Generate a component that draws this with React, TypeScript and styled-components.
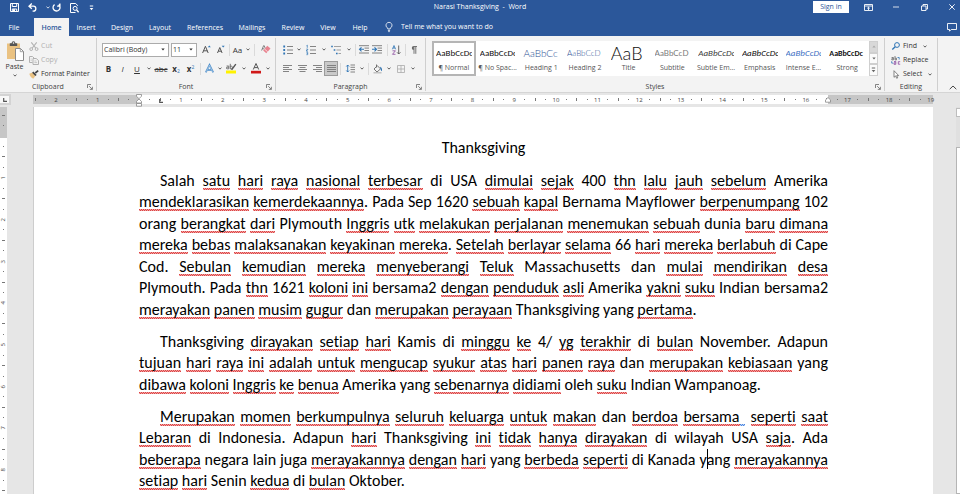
import React from "react";
import styled, { createGlobalStyle, css } from "styled-components";

const UI_FONT = '"Segoe UI", "Open Sans", "Noto Sans", sans-serif';
const DOC_FONT = 'Calibri, Carlito, Lato, sans-serif';
const LIGHT_FONT = 'Lato, Carlito, sans-serif';
const BLUE = "#2b579a";

const GlobalStyle = createGlobalStyle`
  *, *::before, *::after { box-sizing: border-box; }
  html, body { margin: 0; height: 100%; overflow: hidden; }
  #root { height: 100%; }
  button, select, input { font: inherit; color: inherit; }
  svg { display: block; flex: none; overflow: visible; }
`;

const Window = styled.div`
  display: flex;
  flex-direction: column;
  height: 100vh;
  background: #e6e6e6;
  font-family: ${UI_FONT};
  font-size: 7px;
  line-height: 10px;
  color: #333;
`;

/* ---------- Title bar ---------- */

const TitleBar = styled.header`
  display: grid;
  grid-template-columns: 1fr auto 1fr;
  align-items: center;
  height: 17px;
  padding-bottom: 3px;
  background: ${BLUE};
  color: #fff;
`;

const QuickAccess = styled.div`
  display: flex;
  align-items: center;
  padding: 1px 0 0 9px;
`;

const PlainButton = styled.button`
  display: flex;
  align-items: center;
  justify-content: center;
  padding: 0;
  border: 0;
  background: transparent;
`;

const QuickButton = styled(PlainButton)<{ $w: number }>`
  width: ${(p) => p.$w}px;
  height: 12px;
`;

const DocTitle = styled.h1`
  margin: 0;
  font-size: 7px;
  font-weight: 400;
  line-height: 14px;
  white-space: pre;
`;

const WindowControls = styled.div`
  display: flex;
  justify-content: flex-end;
  align-items: center;
`;

const SignIn = styled.button`
  width: 36px;
  height: 12px;
  margin-right: 5px;
  padding: 0;
  border: 0;
  background: #fff;
  color: ${BLUE};
  line-height: 12px;
`;

const ControlButton = styled(PlainButton)`
  width: 28px;
  height: 12px;
  &:last-child { width: 22px; padding-left: 6px; }
`;

/* ---------- Tabs ---------- */

const TabBar = styled.nav`
  display: flex;
  align-items: stretch;
  height: 19px;
  padding-top: 1px;
  background: ${BLUE};
  color: #fff;
`;

const Tab = styled.button<{ $w: number; $active?: boolean }>`
  width: ${(p) => p.$w}px;
  padding: 1px 0 0;
  border: 0;
  background: ${(p) => (p.$active ? "#f3f3f3" : "transparent")};
  color: ${(p) => (p.$active ? BLUE : "#fff")};
  font-weight: ${(p) => (p.$active ? 600 : 400)};
  line-height: 17px;
  &:first-child { margin-right: 6px; }
`;

const TellMe = styled.label`
  display: flex;
  align-items: center;
  flex: 1;
  gap: 8px;
  padding-left: 8px;
`;

const TellInput = styled.input`
  width: 110px;
  padding: 0;
  border: 0;
  outline: 0;
  background: transparent;
  line-height: 12px;
  &::placeholder { color: #fff; opacity: 1; }
`;

const CommentButton = styled(PlainButton)`
  width: 16px;
`;

/* ---------- Ribbon ---------- */

const Ribbon = styled.section`
  display: flex;
  height: 57px;
  padding: 2px 0 1px;
  background: #f3f3f3;
  border-bottom: 1px solid #d5d5d5;
`;

const Group = styled.div<{ $w?: number }>`
  display: flex;
  flex-direction: column;
  ${(p) => (p.$w ? css`width: ${p.$w}px; flex: none;` : css`flex: 1; min-width: 0;`)}
  border-right: 1px solid #cfcfcf;
`;

const GroupBody = styled.div`
  flex: 1;
  min-height: 0;
`;

const GroupFooter = styled.div`
  display: grid;
  grid-template-columns: 12px 1fr 12px;
  align-items: center;
  height: 8px;
  text-align: center;
  color: #444;
`;

const Launcher = styled(PlainButton)`
  grid-column: 3;
  height: 8px;
`;

const GroupName = styled.span`
  grid-column: 2;
  line-height: 8px;
`;

const ClipboardBody = styled.div`
  display: flex;
  padding-top: 1px;
`;

const PasteButton = styled.button`
  display: flex;
  flex-direction: column;
  align-items: center;
  width: 29px;
  padding: 2px 0 0;
  border: 0;
  background: transparent;
`;

const PasteLabel = styled.span`
  line-height: 11px;
  margin-bottom: 2px;
`;

const CommandList = styled.div`
  display: flex;
  flex-direction: column;
`;

const Command = styled.button<{ $off?: boolean }>`
  display: flex;
  align-items: center;
  gap: 2px;
  height: 14px;
  padding: 0;
  border: 0;
  background: transparent;
  color: ${(p) => (p.$off ? "#b1b1b1" : "#333")};
  white-space: nowrap;
`;

const CommandLabel = styled.span`
  margin-right: 4px;
`;

const ToolRows = styled.div`
  display: flex;
  flex-direction: column;
  gap: 4px;
  padding: 4px 0 0 5px;
`;

const ToolRow = styled.div`
  display: flex;
  align-items: center;
  height: 15px;
`;

const Tool = styled(PlainButton)<{ $w: number; $on?: boolean }>`
  width: ${(p) => p.$w}px;
  height: 15px;
  flex: none;
  font-size: 8px;
  ${(p) => p.$on && css`background: #c9c9c9; border: 1px solid #9b9b9b;`}
`;

const Divider = styled.span`
  width: 1px;
  height: 12px;
  margin: 0 2px;
  background: #dadada;
`;

const SelectBox = styled.span<{ $w: number }>`
  display: grid;
  align-items: center;
  width: ${(p) => p.$w}px;
  height: 14px;
  margin-right: 2px;
  border: 1px solid #ababab;
  background: #fff;
  & > * { grid-area: 1 / 1; }
  & > svg { justify-self: end; margin-right: 3px; pointer-events: none; }
`;

const Select = styled.select`
  width: 100%;
  height: 12px;
  padding: 0 0 0 1px;
  border: 0;
  outline: 0;
  appearance: none;
  background: transparent;
  font-size: 7px;
  line-height: 12px;
`;

const SubSup = styled.span<{ $up?: boolean }>`
  display: flex;
  align-items: ${(p) => (p.$up ? "flex-start" : "flex-end")};
  line-height: 10px;
`;

const Small = styled.span`
  font-size: 5px;
  line-height: 6px;
  color: #2f75b5;
`;

/* ---------- Style gallery ---------- */

const Gallery = styled.div`
  display: flex;
  height: 35px;
  margin: 3px 6px 0;
`;

const StyleCards = styled.div`
  display: grid;
  grid-template-columns: repeat(10, minmax(0, 1fr));
  flex: 1;
  min-width: 0;
  background: #fff;
`;

const StyleCard = styled.button<{ $on?: boolean }>`
  display: flex;
  flex-direction: column;
  min-width: 0;
  padding: 0 2px;
  border: 2px solid ${(p) => (p.$on ? "#b5b5b5" : "transparent")};
  background: transparent;
  color: #555;
`;

type Look = "normal" | "h1" | "h2" | "title" | "subtitle" | "subtle" | "emphasis" | "intense" | "strong";

const looks: Record<Look, ReturnType<typeof css>> = {
  normal: css`color: #111;`,
  h1: css`font: 300 10px/20px ${LIGHT_FONT}; color: #2f5496;`,
  h2: css`font: 300 8px/20px ${LIGHT_FONT}; color: #2f5496;`,
  title: css`font: 300 18px/20px ${LIGHT_FONT}; color: #111;`,
  subtitle: css`font: 400 8px/20px ${LIGHT_FONT}; color: #7a7a7a;`,
  subtle: css`font-style: italic; color: #404040;`,
  emphasis: css`font-style: italic; color: #111;`,
  intense: css`font-style: italic; color: #4472c4;`,
  strong: css`font-size: 8px; font-weight: 700; color: #111;`,
};

const Preview = styled.span<{ $look: Look }>`
  align-self: stretch;
  height: 20px;
  overflow: hidden;
  text-align: left;
  white-space: nowrap;
  font-family: ${DOC_FONT};
  font-size: 9px;
  line-height: 20px;
  ${(p) => looks[p.$look]}
`;

const StyleName = styled.span`
  align-self: center;
  line-height: 10px;
  white-space: nowrap;
`;

const GalleryScroll = styled.div`
  display: grid;
  grid-template-rows: repeat(3, 1fr);
  width: 9px;
`;

const ScrollStep = styled(PlainButton)<{ $off?: boolean }>`
  border: 1px solid #cfcfcf;
  background: ${(p) => (p.$off ? "#d8d8d8" : "#fbfbfb")};
  color: ${(p) => (p.$off ? "#aaa" : "#666")};
`;

const EditingBody = styled.div`
  padding: 1px 0 0 6px;
`;

const Collapse = styled(PlainButton)`
  align-self: flex-end;
  width: 22px;
  height: 8px;
  padding-left: 7px;
`;

/* ---------- Rulers and workspace ---------- */

const RulerBar = styled.div`
  display: flex;
  align-items: flex-start;
  height: 14px;
  padding-top: 2px;
`;

const TabSelector = styled(PlainButton)`
  width: 11px;
  height: 11px;
  margin: -1px 22px 0 0;
  border: 2px solid #d3d3d3;
  border-left: 0;
  background: #f8f8f8;
`;

const HorizontalRuler = styled.div`
  position: relative;
  flex: 1;
  height: 9px;
  margin-right: 27px;
  background: linear-gradient(
    90deg,
    #c6c6c6 106px,
    #fff 106px calc(100% - 105px),
    #c6c6c6 calc(100% - 105px)
  );
`;

const HorizontalMarks = styled.div`
  display: grid;
  grid-template-columns: repeat(87, minmax(0, 1fr));
  align-items: center;
  justify-items: center;
  height: 9px;
  margin: 0 -3px;
`;

const Mark = styled.span<{ $kind: "dot" | "tick"; $vertical?: boolean }>`
  width: ${(p) => (p.$vertical && p.$kind === "tick" ? 3 : 1)}px;
  height: ${(p) => (!p.$vertical && p.$kind === "tick" ? 3 : 1)}px;
  background: #777;
`;

const MarkNumber = styled.span<{ $vertical?: boolean }>`
  font-size: 6px;
  line-height: 8px;
  color: #444;
  ${(p) => p.$vertical && css`writing-mode: vertical-rl; transform: rotate(180deg); line-height: 7px;`}
`;

const IndentMarker = styled.span<{ $side: "left" | "right" | "tab" }>`
  position: absolute;
  ${(p) => p.$side === "left" && css`left: 103px; top: -1px;`}
  ${(p) => p.$side === "right" && css`right: 102px; top: 2px;`}
  ${(p) => p.$side === "tab" && css`left: 126px; top: 4px;`}
`;

const Workspace = styled.main`
  display: flex;
  flex: 1;
  min-height: 0;
`;

const VerticalRuler = styled.div`
  width: 7px;
  margin-right: 26px;
  padding-top: 3px;
  overflow: hidden;
  background: linear-gradient(#c6c6c6 31px, #fff 31px);
`;

const VerticalMarks = styled.div`
  display: grid;
  grid-template-rows: repeat(37, minmax(0, 1fr));
  align-items: center;
  justify-items: center;
  height: calc(100% + 2px);
`;

const Page = styled.article`
  flex: 1;
  min-width: 0;
  padding: 30px 105px 0;
  border-left: 1px solid #cdcdcd;
  background: #fff;
  color: #000;
  font-family: ${DOC_FONT};
  font-size: 16px;
  font-variant-ligatures: none;
  line-height: 21px;
`;

const PageTitle = styled.h2`
  margin: 0 0 12px;
  font-size: 16px;
  font-weight: 400;
  text-align: center;
`;

const Paragraph = styled.p`
  display: grid;
  grid-auto-rows: 21px 22px;
  margin: 0 0 11px;
`;

const Line = styled.span`
  display: block;
  text-align: justify;
  text-align-last: justify;
  white-space: nowrap;
  &:first-child { padding-left: 21px; }
  &:last-child { text-align-last: left; }
`;

const Flagged = styled.span<{ $kind: "spelling" | "grammar" }>`
  --wave: ${(p) => (p.$kind === "spelling" ? "#dd4444" : "#4a86e0")};
  --haze: ${(p) => (p.$kind === "spelling" ? "#f0a0a0" : "#b9d0f5")};
  background-image:
    repeating-linear-gradient(90deg, var(--wave) 0 1px, var(--haze) 1px 2px),
    repeating-linear-gradient(90deg, var(--haze) 0 1px, var(--wave) 1px 2px);
  background-size: 100% 1px;
  background-repeat: no-repeat;
  background-position: 0 calc(100% - 1px), 0 100%;
`;

const CaretAnchor = styled.span`
  position: relative;
`;

const TextCaret = styled.span`
  position: absolute;
  left: 0;
  top: -1px;
  width: 1px;
  height: 20px;
  background: #000;
`;

const ScrollBar = styled.div`
  display: flex;
  flex-direction: column;
  width: 4px;
  margin-left: 23px;
  padding-top: 1px;
  background: #e0e0e0;
`;

const ScrollUp = styled(PlainButton)`
  height: 9px;
  border: 1px solid #bdbdbd;
  border-right: 0;
  background: #fff;
`;

const ScrollThumb = styled.div`
  flex: 1;
  margin-top: 30px;
  border: 1px solid #b5b5b5;
  border-right: 0;
  background: #fff;
`;

/* ---------- Icons ---------- */

type SvgProps = { w: number; h: number; children: React.ReactNode };
const Svg = ({ w, h, children }: SvgProps) => (
  <svg width={w} height={h} viewBox={`0 0 ${w} ${h}`} fill="none" stroke="currentColor" strokeWidth="1" aria-hidden="true">
    {children}
  </svg>
);

const Chevron = () => (
  <Svg w={4} h={3}><path d="M.5 .7 2 2.1 3.5 .7" strokeWidth=".8" /></Svg>
);
const Arrow = ({ up }: { up?: boolean }) => (
  <Svg w={4} h={3}><path d={up ? "M.3 2.4h3.4L2 .5z" : "M.3.6h3.4L2 2.5z"} fill="currentColor" stroke="none" /></Svg>
);
const SaveIcon = () => (
  <Svg w={9} h={9}><path d="M.5.5h8v8h-8z" /><path d="M2.3.5v3h4.4v-3M2.3 8.5V6h4.4v2.5" /><path d="M3 6.3h2v2H3z" fill="currentColor" stroke="none" /></Svg>
);
const UndoIcon = () => (
  <Svg w={9} h={9}><path d="M3.8.6 1 3.2l2.8 2.6M1.2 3.2h4.2a2.4 2.4 0 0 1 0 4.9H4.6" strokeWidth="1.3" /></Svg>
);
const RedoIcon = () => (
  <Svg w={9} h={9}><path d="M2.6 1.6a3.5 3.5 0 1 0 4 .1M7.9.4v2.7H5.1" strokeWidth="1.3" /></Svg>
);
const PreviewIcon = () => (
  <Svg w={9} h={10}><path d="M7.5 3V2.4L5.7.5H.5v9h5" /><circle cx="5.1" cy="5.4" r="2" /><path d="m6.6 7 2 2.3" strokeWidth="1.3" /></Svg>
);
const CustomizeIcon = () => (
  <Svg w={5} h={6}><path d="M.8 1h3.4" /><path d="M.7 3h3.6L2.5 5.2z" fill="currentColor" stroke="none" /></Svg>
);
const RibbonOptionsIcon = () => (
  <Svg w={9} h={7}><path d="M.5.5h8v6h-8zM.5 2h8M4.5 6V3.2M3.2 4.4l1.3-1.2 1.3 1.2" strokeWidth=".9" /></Svg>
);
const MinimizeIcon = () => <Svg w={6} h={2}><path d="M0 1h6" strokeWidth=".8" /></Svg>;
const RestoreIcon = () => (
  <Svg w={7} h={7}><path d="M.5 2h4.5v4.5H.5zM2 2V.5h4.5V5H5" strokeWidth=".9" /></Svg>
);
const CloseIcon = () => <Svg w={6} h={6}><path d="m.3.3 5.4 5.4M5.7.3.3 5.7" strokeWidth=".9" /></Svg>;
const BulbIcon = () => (
  <Svg w={8} h={10}><path d="M2.8 7V6.1A3 3 0 1 1 5.2 6.1V7zM2.9 8.4h2.2M3.2 9.6h1.6" strokeWidth=".8" /></Svg>
);
const CommentIcon = () => (
  <Svg w={10} h={9}><path d="M.5.5h9v6H4.2L2.5 8.2V6.5h-2z" strokeWidth=".9" /></Svg>
);
const PasteIcon = () => (
  <Svg w={18} h={20}>
    <path d="M1 2.5h13V18H1z" fill="#eac282" stroke="none" />
    <path d="M3.8 2.2h1.8a1.9 1.9 0 0 1 3.8 0h1.8v2.9H3.8z" fill="#555" stroke="none" />
    <circle cx="7.5" cy="2" r=".8" fill="#fff" stroke="none" />
    <path d="M9.5 7.5h5l3 3v9h-8z" fill="#fff" stroke="#8a8a8a" />
    <path d="M14.3 7.5v3.2h3.2" stroke="#8a8a8a" strokeWidth=".8" />
  </Svg>
);
const CutIcon = () => (
  <Svg w={10} h={9}><path d="m2.3.4 4.4 5.6M7.7.4 3.3 6" strokeWidth="1.1" /><circle cx="2.2" cy="7.1" r="1.4" /><circle cx="7.6" cy="7.1" r="1.4" /></Svg>
);
const CopyIcon = () => (
  <Svg w={10} h={9}><path d="M3.5 6.5h-3v-6h3L5 2" /><path d="M4 2.5h3.2l2.3 2v4H4z" fill="#f3f3f3" /><path d="M5.4 5h2M5.4 6.6h2.7M1.7 3h1M1.7 4.6h1" strokeWidth=".7" /></Svg>
);
const BrushIcon = () => (
  <Svg w={10} h={9}>
    <path d="M.3 3.8 3.2 2.6 6.3 6l-2 2.7C2.5 8.3 1 6.3.3 3.8z" fill="#eac282" stroke="none" />
    <path d="m3.1 2.7 1.3-1.2 3.3 3.4-1.4 1.2z" fill="#444" stroke="none" />
    <path d="M6.3 3 9.2.6" stroke="#444" strokeWidth="1.7" />
  </Svg>
);
const LauncherIcon = () => (
  <Svg w={6} h={6}><path d="M.5 4V.5H4M2.2 2.2l3 3M5.4 2.8v2.6H2.8" strokeWidth=".8" stroke="#666" /></Svg>
);
const EraserIcon = () => (
  <Svg w={10} h={9}>
    <path d="m.6 5.5 2-4.8h.6l1 2.5M1.4 3.8h2" stroke="#666" strokeWidth=".8" />
    <path d="M6.3.8 9.5 3.5 5.3 8.3 2.2 5.6z" fill="#e8838f" stroke="none" />
    <path d="m3.6 4.1 3.1 2.7" stroke="#fff" strokeWidth=".7" />
  </Svg>
);
const GrowIcon = ({ down }: { down?: boolean }) => (
  <Svg w={9} h={9}>
    <path d={down ? "m1.5 8 2.3-5.5L6.1 8M2.3 6.2h3" : "M.6 8 3.4 1.3 6.2 8M1.5 5.8h3.8"} stroke="#555" />
    <path d={down ? "M5.7.8h3L7.2 2.4z" : "M5.8 2.3h3L7.3.6z"} fill="#2f75b5" stroke="none" />
  </Svg>
);
const EffectIcon = () => (
  <Svg w={9} h={9}><path d="M.8 8.3 4.5.8l3.7 7.5M2.7 6h3.6" stroke="#4a8cc9" strokeWidth="1.7" /><path d="m1.2 7.8 3.3-6.5 3.2 6.5" stroke="#e4f0fa" strokeWidth=".5" /></Svg>
);
const HighlightIcon = () => (
  <Svg w={11} h={11}>
    <path d="M2.8 2.7v3.1M.6 3h1.7M2.7 4.2H1.2a.8.8 0 0 0 0 1.6h1.5M4.3.8v5c1.8.3 2.3-.8 2-1.9C6 2.8 4.6 3 4.3 3.6" stroke="#555" strokeWidth=".8" />
    <path d="M5.6 6.8 9.8 1.2" stroke="#555" strokeWidth="1.4" />
    <path d="M0 7.5h10v3H0z" fill="#fff200" stroke="none" />
  </Svg>
);
const FontColorIcon = () => (
  <Svg w={10} h={11}>
    <path d="m2.3 6.5 2.7-6 2.7 6M3.2 4.6h3.6" stroke="#555" />
    <path d="M0 7.8h10v2.7H0z" fill="#d01818" stroke="none" />
  </Svg>
);
const ListIcon = ({ ordered }: { ordered?: boolean }) => (
  <Svg w={10} h={10}>
    <path d="M4 1.5h6M4 5h6M4 8.5h6" stroke="#777" strokeWidth=".9" />
    {ordered
      ? <path d="M1.3.1v2.7M.5.7l.8-.5M.4 4h1.3v1H.5v1.2h1.4M.4 7.3h1.3v2.4H.4M.7 8.5h1" stroke="#2f75b5" strokeWidth=".7" />
      : <path d="M.3.6h1.8v1.8H.3zM.3 4.1h1.8v1.8H.3zM.3 7.6h1.8v1.8H.3z" fill="#2f75b5" stroke="none" />}
  </Svg>
);
const MultilevelIcon = () => (
  <Svg w={10} h={10}>
    <path d="M3 1.5h7M5.5 5H10M7.5 8.5H10" stroke="#999" strokeWidth=".9" />
    <path d="M.2.7h1.6v1.6H.2zM2.7 4.2h1.6v1.6H2.7zM5 7.7h1.6v1.6H5z" fill="#2f75b5" stroke="none" />
  </Svg>
);
const IndentIcon = ({ out }: { out?: boolean }) => (
  <Svg w={10} h={9}>
    <path d="M0 .7h10M5.5 3.1H10M5.5 5.5H10M0 8h10" stroke="#777" strokeWidth=".9" />
    <path d={out ? "M5 4.3H.7M2.5 2.3l-2 2 2 2" : "M0 4.3h4.3M2.5 2.3l2 2-2 2"} stroke="#2f75b5" strokeWidth="1.1" />
  </Svg>
);
const SortIcon = () => (
  <Svg w={9} h={10}>
    <path d="M.4 4.3 2 .5l1.6 3.8M.9 3h2.2" stroke="#2f75b5" strokeWidth=".8" />
    <path d="M.5 5.8h2.9L.5 9.3h3" stroke="#8a4a9e" strokeWidth=".8" />
    <path d="M6.7.5V9M5 7.3 6.7 9l1.7-1.7" stroke="#555" strokeWidth=".9" />
  </Svg>
);
const PilcrowIcon = () => (
  <Svg w={6} h={8}><path d="M3 .5v7.3M4.8.5v7.3M6 .5H2.5" stroke="#666" strokeWidth=".9" /><path d="M2.8.1a2 2 0 0 0 0 4z" fill="#666" stroke="none" /></Svg>
);
const AlignIcon = ({ kind }: { kind: "left" | "center" | "right" | "full" }) => {
  const d = {
    left: "M0 .5h9M0 2.5h6M0 4.5h9M0 6.5h6",
    center: "M0 .5h9M1.5 2.5h6M0 4.5h9M1.5 6.5h6",
    right: "M0 .5h9M3 2.5h6M0 4.5h9M3 6.5h6",
    full: "M0 .5h9M0 2.5h9M0 4.5h9M0 6.5h9",
  }[kind];
  return <Svg w={9} h={7}><path d={d} stroke="#777" strokeWidth=".9" /></Svg>;
};
const SpacingIcon = () => (
  <Svg w={9} h={9}>
    <path d="M4.5 1H9M4.5 3.3H9M4.5 5.6H9M4.5 8H9" stroke="#777" strokeWidth=".9" />
    <path d="M1.7 1v7M.3 2.5 1.7 1l1.4 1.5M.3 6.5 1.7 8l1.4-1.5" stroke="#2f75b5" strokeWidth=".9" />
  </Svg>
);
const BucketIcon = () => (
  <Svg w={10} h={10}>
    <path d="M3.5.5v3M1 5l3.3-3.3 3.2 3.2L4 8z" stroke="#666" strokeWidth=".9" />
    <path d="M7 2.8c1.6.6 2.3 2 2 4.5-.9-.6-1.5-1.6-1.5-2.6z" fill="#2f75b5" stroke="none" />
    <path d="M.5 8.8h8" stroke="#bbb" strokeWidth="1.3" />
  </Svg>
);
const BordersIcon = () => (
  <Svg w={8} h={8}><path d="M.5.5h7v7h-7zM4 .5v7M.5 4h7" stroke="#aaa" strokeWidth=".8" /></Svg>
);
const FindIcon = () => (
  <Svg w={10} h={8}><circle cx="6" cy="3" r="2.4" stroke="#2f75b5" /><path d="M4.2 4.8 1.3 7.5" stroke="#2f75b5" strokeWidth="1.4" /></Svg>
);
const ReplaceIcon = () => (
  <Svg w={10} h={9}>
    <path d="M.6 1.5h1.8v2.4H.8V2.7h1.5M4 0v3.9h1.5V2.2H4" stroke="#666" strokeWidth=".8" />
    <path d="M3 5.5h1.8v2.8H3V6.8h1.6M9.2 5.7H7.3v2.5h1.9" stroke="#8a4a9e" strokeWidth=".8" />
    <path d="M.7 5.2v1.9h1.5M6.5 1.5h1.7v2" stroke="#2f75b5" strokeWidth=".8" />
  </Svg>
);
const PointerIcon = () => (
  <Svg w={10} h={9}><path d="M3 .7v6.6l1.6-1.4 1.1 2.4 1-.5-1-2.2h2z" stroke="#666" strokeWidth=".8" fill="#fff" /></Svg>
);
const CollapseIcon = () => <Svg w={8} h={5}><path d="M.7 4.2 4 1l3.3 3.2" strokeWidth=".9" /></Svg>;
const TabStopIcon = () => <Svg w={4} h={4}><path d="M.7 0v3.3H4" stroke="#555" strokeWidth="1.2" /></Svg>;
const HourglassIcon = () => (
  <Svg w={6} h={13}><path d="M.5.5h5v1.7L3 4.7.5 2.2zM3 5l2.5 2.4V9h-5V7.4zM.5 9.5h5v2.7h-5z" fill="#fff" stroke="#888" strokeWidth=".8" /></Svg>
);
const RightIndentIcon = () => (
  <Svg w={6} h={6}><path d="m3 .5 2.5 2.4v2.3h-5V2.9z" fill="#fff" stroke="#888" strokeWidth=".8" /></Svg>
);

/* ---------- Data ---------- */

const tabs: [string, number][] = [
  ["File", 28], ["Home", 35], ["Insert", 34], ["Design", 38], ["Layout", 38], ["References", 52],
  ["Mailings", 42], ["Review", 40], ["View", 30], ["Help", 34],
];

const styleCards: { name: string; look: Look; sample: string }[] = [
  { name: "¶ Normal", look: "normal", sample: "AaBbCcDc" },
  { name: "¶ No Spac...", look: "normal", sample: "AaBbCcDc" },
  { name: "Heading 1", look: "h1", sample: "AaBbCc" },
  { name: "Heading 2", look: "h2", sample: "AaBbCcD" },
  { name: "Title", look: "title", sample: "AaB" },
  { name: "Subtitle", look: "subtitle", sample: "AaBbCcD" },
  { name: "Subtle Em...", look: "subtle", sample: "AaBbCcDc" },
  { name: "Emphasis", look: "emphasis", sample: "AaBbCcDc" },
  { name: "Intense E...", look: "intense", sample: "AaBbCcDc" },
  { name: "Strong", look: "strong", sample: "AaBbCcDc" },
];

/* "_" flags a word for spelling, "=" is a flagged extra space, "|" is the text cursor. */
const paragraphs: string[][] = [
  [
    "Salah _satu _hari _raya _nasional _terbesar di USA _dimulai _sejak 400 _thn _lalu _jauh _sebelum Amerika",
    "_mendeklarasikan _kemerdekaannya. Pada Sep 1620 _sebuah _kapal Bernama Mayflower _berpenumpang 102",
    "orang _berangkat _dari Plymouth _Inggris _utk _melakukan _perjalanan _menemukan _sebuah dunia _baru _dimana",
    "_mereka _bebas _malaksanakan _keyakinan _mereka. _Setelah _berlayar _selama 66 _hari _mereka _berlabuh di Cape",
    "Cod. _Sebulan _kemudian _mereka _menyeberangi _Teluk Massachusetts dan _mulai _mendirikan _desa",
    "Plymouth. Pada _thn 1621 _koloni _ini bersama2 _dengan _penduduk _asli Amerika _yakni _suku Indian bersama2",
    "_merayakan _panen _musim _gugur dan _merupakan _perayaan Thanksgiving yang _pertama.",
  ],
  [
    "Thanksgiving _dirayakan _setiap _hari Kamis di _minggu _ke 4/ _yg _terakhir di _bulan November. Adapun",
    "_tujuan _hari _raya _ini _adalah _untuk _mengucap _syukur _atas _hari _panen _raya dan _merupakan _kebiasaan yang",
    "_dibawa _koloni _Inggris _ke _benua Amerika yang _sebenarnya _didiami oleh _suku Indian Wampanoag.",
  ],
  [
    "_Merupakan _momen _berkumpulnya _seluruh _keluarga _untuk _makan dan _berdoa _bersama= _seperti _saat",
    "_Lebaran di Indonesia. Adapun _hari Thanksgiving _ini _tidak _hanya _dirayakan di wilayah USA _saja. Ada",
    "_beberapa negara lain juga _merayakannya _dengan _hari yang _berbeda _seperti di Kanada y|ang _merayakannya",
    "_setiap _hari Senin _kedua di _bulan Oktober.",
  ],
];

const Word = ({ text }: { text: string }) => {
  if (text.startsWith("_")) {
    const [, word, tail] = text.match(/^_([A-Za-z]+)(.*)$/) as RegExpMatchArray;
    return (
      <>
        <Flagged $kind="spelling">{word}</Flagged>
        {tail === "=" ? <Flagged $kind="grammar">{"\u00a0"}</Flagged> : tail}
      </>
    );
  }
  if (text.includes("|")) {
    const [before, after] = text.split("|");
    return <>{before}<CaretAnchor><TextCaret /></CaretAnchor>{after}</>;
  }
  return <>{text}</>;
};

const RulerMarks = ({ from, count, vertical }: { from: number; count: number; vertical?: boolean }) => (
  <>
    {Array.from({ length: count }, (_, i) => {
      const quarter = from + i;
      if (quarter === 0) return <span key={i} />;
      if (quarter % 4 === 0) return <MarkNumber key={i} $vertical={vertical}>{Math.abs(quarter / 4)}</MarkNumber>;
      return <Mark key={i} $kind={quarter % 2 === 0 ? "tick" : "dot"} $vertical={vertical} />;
    })}
  </>
);

const Footer = ({ name, launcher = true }: { name: string; launcher?: boolean }) => (
  <GroupFooter>
    <GroupName>{name}</GroupName>
    {launcher && <Launcher aria-label={`${name} settings`}><LauncherIcon /></Launcher>}
  </GroupFooter>
);

const More = ({ label }: { label: string }) => (
  <Tool $w={9} aria-label={label}><Chevron /></Tool>
);

/* ---------- App ---------- */

export default function App() {
  return (
    <>
      <GlobalStyle />
      <Window>
        <TitleBar>
          <QuickAccess>
            <QuickButton $w={10} aria-label="Save"><SaveIcon /></QuickButton>
            <QuickButton $w={27} aria-label="Undo"><UndoIcon /></QuickButton>
            <QuickButton $w={4} aria-label="Undo options"><Chevron /></QuickButton>
            <QuickButton $w={12} aria-label="Redo"><RedoIcon /></QuickButton>
            <QuickButton $w={24} aria-label="Print preview"><PreviewIcon /></QuickButton>
            <QuickButton $w={10} aria-label="Customize toolbar"><CustomizeIcon /></QuickButton>
          </QuickAccess>
          <DocTitle>{"Narasi Thanksgiving  -  Word"}</DocTitle>
          <WindowControls>
            <SignIn>Sign in</SignIn>
            <ControlButton aria-label="Ribbon display options"><RibbonOptionsIcon /></ControlButton>
            <ControlButton aria-label="Minimize"><MinimizeIcon /></ControlButton>
            <ControlButton aria-label="Restore"><RestoreIcon /></ControlButton>
            <ControlButton aria-label="Close"><CloseIcon /></ControlButton>
          </WindowControls>
        </TitleBar>

        <TabBar>
          {tabs.map(([name, w]) => (
            <Tab key={name} $w={w} $active={name === "Home"}>{name}</Tab>
          ))}
          <TellMe>
            <BulbIcon />
            <TellInput aria-label="Tell me what you want to do" placeholder="Tell me what you want to do" />
          </TellMe>
          <CommentButton aria-label="Comments"><CommentIcon /></CommentButton>
        </TabBar>

        <Ribbon>
          <Group $w={97}>
            <GroupBody>
              <ClipboardBody>
                <PasteButton>
                  <PasteIcon />
                  <PasteLabel>Paste</PasteLabel>
                  <Chevron />
                </PasteButton>
                <CommandList>
                  <Command $off><CutIcon />Cut</Command>
                  <Command $off><CopyIcon />Copy</Command>
                  <Command><BrushIcon />Format Painter</Command>
                </CommandList>
              </ClipboardBody>
            </GroupBody>
            <Footer name="Clipboard" />
          </Group>

          <Group $w={179}>
            <GroupBody>
              <ToolRows>
                <ToolRow>
                  <SelectBox $w={67}>
                    <Select aria-label="Font"><option>Calibri (Body)</option></Select>
                    <Arrow />
                  </SelectBox>
                  <SelectBox $w={26}>
                    <Select aria-label="Font size"><option>11</option></Select>
                    <Arrow />
                  </SelectBox>
                  <Tool $w={14} aria-label="Grow font"><GrowIcon /></Tool>
                  <Tool $w={14} aria-label="Shrink font"><GrowIcon down /></Tool>
                  <Divider />
                  <Tool $w={11}>Aa</Tool>
                  <More label="Change case" />
                  <Divider />
                  <Tool $w={17} aria-label="Clear formatting"><EraserIcon /></Tool>
                </ToolRow>
                <ToolRow>
                  <Tool $w={13}><b>B</b></Tool>
                  <Tool $w={15}><i>I</i></Tool>
                  <Tool $w={14}><u>U</u></Tool>
                  <More label="Underline style" />
                  <Tool $w={16}><s>abc</s></Tool>
                  <Tool $w={14} aria-label="Subscript"><SubSup><b>x</b><Small>2</Small></SubSup></Tool>
                  <Tool $w={15} aria-label="Superscript"><SubSup $up><b>x</b><Small>2</Small></SubSup></Tool>
                  <Divider />
                  <Tool $w={12} aria-label="Text effects"><EffectIcon /></Tool>
                  <More label="Text effect options" />
                  <Tool $w={15} aria-label="Highlight"><HighlightIcon /></Tool>
                  <More label="Highlight colors" />
                  <Tool $w={15} aria-label="Font color"><FontColorIcon /></Tool>
                  <More label="Font colors" />
                </ToolRow>
              </ToolRows>
            </GroupBody>
            <Footer name="Font" />
          </Group>

          <Group $w={150}>
            <GroupBody>
              <ToolRows>
                <ToolRow>
                  <Tool $w={13} aria-label="Bullets"><ListIcon /></Tool>
                  <More label="Bullet styles" />
                  <Tool $w={16} aria-label="Numbering"><ListIcon ordered /></Tool>
                  <More label="Numbering styles" />
                  <Tool $w={16} aria-label="Multilevel list"><MultilevelIcon /></Tool>
                  <More label="Multilevel styles" />
                  <Divider />
                  <Tool $w={11} aria-label="Decrease indent"><IndentIcon out /></Tool>
                  <Tool $w={16} aria-label="Increase indent"><IndentIcon /></Tool>
                  <Divider />
                  <Tool $w={13} aria-label="Sort"><SortIcon /></Tool>
                  <Divider />
                  <Tool $w={12} aria-label="Show paragraph marks"><PilcrowIcon /></Tool>
                </ToolRow>
                <ToolRow>
                  <Tool $w={13} aria-label="Align left"><AlignIcon kind="left" /></Tool>
                  <Tool $w={16} aria-label="Center"><AlignIcon kind="center" /></Tool>
                  <Tool $w={14} aria-label="Align right"><AlignIcon kind="right" /></Tool>
                  <Tool $w={14} $on aria-label="Justify"><AlignIcon kind="full" /></Tool>
                  <Divider />
                  <Tool $w={14} aria-label="Line spacing"><SpacingIcon /></Tool>
                  <More label="Line spacing options" />
                  <Divider />
                  <Tool $w={13} aria-label="Shading"><BucketIcon /></Tool>
                  <More label="Shading colors" />
                  <Tool $w={15} aria-label="Borders"><BordersIcon /></Tool>
                  <More label="Border styles" />
                </ToolRow>
              </ToolRows>
            </GroupBody>
            <Footer name="Paragraph" />
          </Group>

          <Group>
            <GroupBody>
              <Gallery>
                <StyleCards>
                  {styleCards.map((card, i) => (
                    <StyleCard key={card.name} $on={i === 0}>
                      <Preview $look={card.look}>{card.sample}</Preview>
                      <StyleName>{card.name}</StyleName>
                    </StyleCard>
                  ))}
                </StyleCards>
                <GalleryScroll>
                  <ScrollStep $off aria-label="Previous styles"><Arrow up /></ScrollStep>
                  <ScrollStep aria-label="Next styles"><Arrow /></ScrollStep>
                  <ScrollStep aria-label="All styles"><CustomizeIcon /></ScrollStep>
                </GalleryScroll>
              </Gallery>
            </GroupBody>
            <Footer name="Styles" />
          </Group>

          <Group $w={53}>
            <GroupBody>
              <EditingBody>
                <Command><FindIcon /><CommandLabel>Find</CommandLabel><Chevron /></Command>
                <Command><ReplaceIcon />Replace</Command>
                <Command><PointerIcon /><CommandLabel>Select</CommandLabel><Chevron /></Command>
              </EditingBody>
            </GroupBody>
            <Footer name="Editing" launcher={false} />
          </Group>
          <Collapse aria-label="Collapse ribbon"><CollapseIcon /></Collapse>
        </Ribbon>

        <RulerBar>
          <TabSelector aria-label="Tab stop type"><TabStopIcon /></TabSelector>
          <HorizontalRuler>
            <HorizontalMarks><RulerMarks from={-10} count={87} /></HorizontalMarks>
            <IndentMarker $side="left"><HourglassIcon /></IndentMarker>
            <IndentMarker $side="tab"><TabStopIcon /></IndentMarker>
            <IndentMarker $side="right"><RightIndentIcon /></IndentMarker>
          </HorizontalRuler>
        </RulerBar>

        <Workspace>
          <VerticalRuler>
            <VerticalMarks><RulerMarks from={-2} count={37} vertical /></VerticalMarks>
          </VerticalRuler>
          <Page>
            <PageTitle>Thanksgiving</PageTitle>
            {paragraphs.map((lines, p) => (
              <Paragraph key={p}>
                {lines.map((line, l) => (
                  <Line key={l}>
                    {line.split(" ").map((token, t) => (
                      <React.Fragment key={t}>{t > 0 && " "}<Word text={token} /></React.Fragment>
                    ))}
                  </Line>
                ))}
              </Paragraph>
            ))}
          </Page>
          <ScrollBar>
            <ScrollUp aria-label="Scroll up" />
            <ScrollThumb />
          </ScrollBar>
        </Workspace>
      </Window>
    </>
  );
}
